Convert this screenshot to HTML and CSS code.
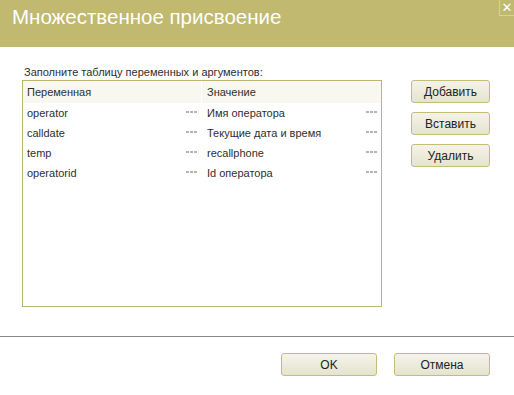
FILE: index.html
```html
<!DOCTYPE html>
<html lang="ru">
<head>
    <meta charset="UTF-8">
    <title>Множественное присвоение</title>
    <link rel="stylesheet" href="styles.css">
</head>
<body>

<div class="dialog">
    <div class="titlebar">
        <span class="title">Множественное присвоение</span>
        <span class="close">&#x2715;</span>
    </div>

    <div class="main">
        <div class="caption">Заполните таблицу переменных и аргументов:</div>

        <div class="table">
            <div class="row head">
                <div class="cell">Переменная</div>
                <div class="cell">Значение</div>
            </div>
            <div class="row">
                <div class="cell">operator<span class="dots"></span></div>
                <div class="cell">Имя оператора<span class="dots"></span></div>
            </div>
            <div class="row">
                <div class="cell">calldate<span class="dots"></span></div>
                <div class="cell">Текущие дата и время<span class="dots"></span></div>
            </div>
            <div class="row">
                <div class="cell">temp<span class="dots"></span></div>
                <div class="cell">recallphone<span class="dots"></span></div>
            </div>
            <div class="row">
                <div class="cell">operatorid<span class="dots"></span></div>
                <div class="cell">Id оператора<span class="dots"></span></div>
            </div>
        </div>

        <div class="side">
            <button class="btn">Добавить</button>
            <button class="btn">Вставить</button>
            <button class="btn">Удалить</button>
        </div>
    </div>

    <div class="footer">
        <button class="btn wide">OK</button>
        <button class="btn wide">Отмена</button>
    </div>
</div>

</body>
</html>
```

FILE: styles.css
```css
body {
    margin: 0;
    font-family: 'Liberation Sans', Arial, sans-serif;
    font-size: 11px;
    color: #2e2e2e;
    background: #fff;
}
.dialog {
    width: 514px;
    height: 395px;
}
.titlebar {
    position: relative;
    height: 47px;
    background: #c0b96f;
    padding-left: 12px;
    box-sizing: border-box;
}
.title {
    display: block;
    padding-top: 4px;
    color: #fff;
    font-size: 20.5px;
    line-height: 25px;
}
.close {
    position: absolute;
    top: 0;
    right: 0;
    width: 14px;
    height: 15px;
    border-left: 1px solid #d6d1a2;
    border-bottom: 1px solid #d6d1a2;
    color: #fff;
    font-family: 'DejaVu Sans', sans-serif;
    font-size: 13px;
    line-height: 15px;
    text-align: center;
}
.main {
    display: grid;
    grid-template-columns: 360px 79px;
    column-gap: 29px;
    padding: 18px 0 0 22px;
}
.caption {
    grid-column: 1 / 3;
    line-height: 14px;
    margin-bottom: 1px;
    padding-left: 2px;
}
.table {
    height: 227px;
    border: 1px solid #bdb56c;
    box-sizing: border-box;
}
.row {
    display: flex;
    height: 20px;
    line-height: 20px;
}
.row.head {
    height: 22px;
    line-height: 22px;
    background: #f8f7f0;
}
.cell {
    display: flex;
    justify-content: space-between;
    align-items: center;
    padding-left: 4px;
    padding-right: 4px;
    box-sizing: border-box;
}
.cell:first-child {
    width: 178px;
}
.cell:last-child {
    flex: 1;
    padding-left: 5px;
}
.head .cell:last-child {
    border-left: 1px solid #fff;
}
.row:not(.head) .cell:last-child {
    margin-left: 1px;
}
.dots {
    width: 11px;
    height: 2px;
    margin-top: -2px;
    background: repeating-linear-gradient(90deg, #b4b4b4 0 3px, transparent 3px 4px);
}
.side {
    display: flex;
    flex-direction: column;
    gap: 9px;
}
.btn {
    height: 23px;
    padding: 0;
    border: 1px solid #c4bc79;
    border-radius: 3px;
    background: linear-gradient(#f4f3e8, #e5e4d0);
    font-family: 'Liberation Sans', Arial, sans-serif;
    font-size: 12px;
    color: #222;
}
.footer {
    display: flex;
    justify-content: flex-end;
    gap: 17px;
    margin-top: 29px;
    padding: 16px 24px 0 0;
    border-top: 1px solid #888;
}
.btn.wide {
    width: 96px;
}
```
